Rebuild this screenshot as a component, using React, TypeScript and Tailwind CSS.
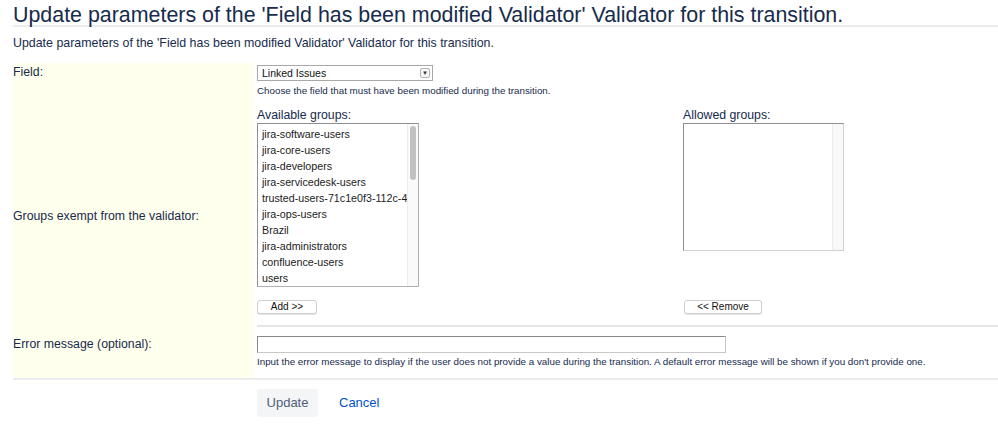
import React from "react";

const groups = [
  "jira-software-users",
  "jira-core-users",
  "jira-developers",
  "jira-servicedesk-users",
  "trusted-users-71c1e0f3-112c-4",
  "jira-ops-users",
  "Brazil",
  "jira-administrators",
  "confluence-users",
  "users",
];

export default function App() {
  return (
    <div
      className="w-[998px] h-[425px] bg-white pl-[13px] text-[#172b4d] overflow-hidden"
      style={{ fontFamily: '"Liberation Sans", Arial, sans-serif' }}
    >
      <h2 className="text-[21.4px] leading-[20px] pt-[5px] pb-[0px] border-b-2 border-[#ebecf0] whitespace-nowrap">
        Update parameters of the 'Field has been modified Validator' Validator for this transition.
      </h2>
      <p className="text-[12.4px] leading-[16px] mt-[8px]">
        Update parameters of the 'Field has been modified Validator' Validator for this transition.
      </p>

      <div className="mt-[12px] border-b-2 border-[#ebecf0] grid grid-cols-[240px_1fr] gap-x-[4px]">
        {/* Row 1 */}
        <div className="bg-[#ffffee] text-[12.3px] leading-[18px]">Field:</div>
        <div className="pt-[2px] pb-[2px]">
          <div className="w-[176px] h-[16px] border border-[#a8a8a8] bg-white flex items-center justify-between pl-[4px] pr-[2px]">
            <span className="text-[10.5px] text-[#111] leading-none">Linked Issues</span>
            <span className="w-[10px] h-[10px] border border-[#b5b5b5] rounded-[2px] flex items-center justify-center text-[6px] text-[#333] leading-none bg-[#f6f6f6]">
              ▼
            </span>
          </div>
          <div className="text-[9.8px] leading-[12px] mt-[4px] whitespace-nowrap">
            Choose the field that must have been modified during the transition.
          </div>
        </div>

        {/* Row 2 */}
        <div className="bg-[#ffffee] text-[12.3px] flex items-center pt-[6px]">
          Groups exempt from the validator:
        </div>
        <div className="border-b-2 border-[#e4e5e7] pt-[8px] pb-[11px] flex">
          <div className="w-[426px] flex flex-col">
            <div className="text-[12.3px] leading-[16px]">Available groups:</div>
            <div className="w-[162px] h-[164px] border border-[#b0b0b0] border-t-[#8f8f8f] border-l-[#8f8f8f] flex bg-white">
              <div className="flex-1 overflow-hidden pl-[4px] pt-[2px]">
                {groups.map((g) => (
                  <div key={g} className="text-[10.7px] leading-[16px] text-[#1b1b1b] whitespace-nowrap">
                    {g}
                  </div>
                ))}
              </div>
              <div className="w-[11px] border-l border-[#ececec] bg-[#fafafa] relative">
                <div className="absolute left-[2px] top-[2px] w-[6px] h-[54px] rounded-full bg-[#c1c1c1]" />
              </div>
            </div>
            <div className="mt-[13px]">
              <div className="w-[60px] h-[14px] border border-[#cfcfcf] rounded-[3px] bg-white text-[10px] leading-[12px] text-center text-[#111] shadow-[0_1px_0_#e5e5e5]">
                Add &gt;&gt;
              </div>
            </div>
          </div>
          <div className="flex flex-col">
            <div className="text-[12.3px] leading-[16px]">Allowed groups:</div>
            <div className="w-[161px] h-[128px] border border-[#d0d0d0] border-t-[#8f8f8f] border-l-[#8f8f8f] flex bg-white">
              <div className="flex-1" />
              <div className="w-[11px] border-l border-[#ececec] bg-[#f8f8f8]" />
            </div>
            <div className="mt-auto">
              <div className="w-[78px] h-[14px] border border-[#cfcfcf] rounded-[3px] bg-white text-[10px] leading-[12px] text-center text-[#111] ml-[1px] shadow-[0_1px_0_#e5e5e5]">
                &lt;&lt; Remove
              </div>
            </div>
          </div>
        </div>

        {/* Row 3 */}
        <div className="bg-[#ffffee] text-[12.3px] leading-[16px] pt-[9px]">Error message (optional):</div>
        <div className="pt-[9px] pb-[10px]">
          <div className="w-[469px] h-[17px] border border-[#c8c8c8] border-t-[#8a8a8a] border-l-[#8a8a8a] bg-white" />
          <div className="text-[9.8px] leading-[12px] mt-[3px] whitespace-nowrap">
            Input the error message to display if the user does not provide a value during the transition. A default error message will be shown if you don't provide one.
          </div>
        </div>
      </div>

      <div className="flex items-center pl-[244px] mt-[9px] gap-[21px]">
        <div className="w-[61px] h-[28px] rounded-[3px] bg-[#f4f5f7] text-[#505f79] text-[13px] flex items-center justify-center">
          Update
        </div>
        <div className="text-[#0052cc] text-[13px]">Cancel</div>
      </div>
    </div>
  );
}
